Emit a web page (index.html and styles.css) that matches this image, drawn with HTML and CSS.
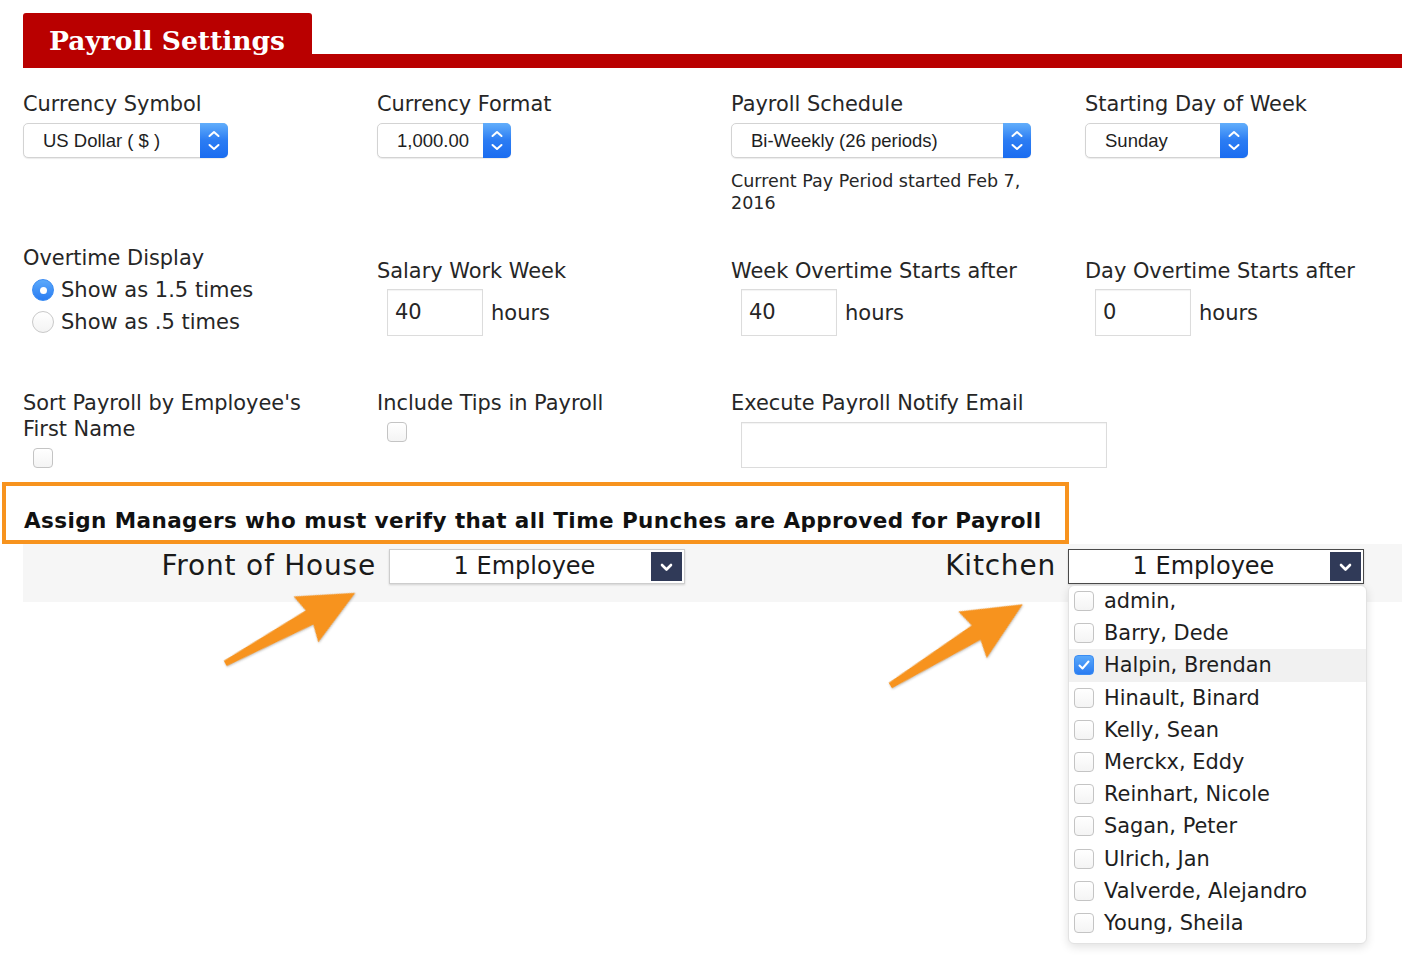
FILE: index.html
```html
<!DOCTYPE html>
<html>
<head>
<meta charset="utf-8">
<title>Payroll Settings</title>
<link rel="stylesheet" href="styles.css">
</head>
<body>
<div class="page">
  <div class="header">
    <div class="tab">Payroll Settings</div>
    <div class="bar"></div>
  </div>

  <div class="grid row1">
    <div class="cell">
      <div class="label">Currency Symbol</div>
      <div class="mselect w-sym"><span class="mtext">US Dollar ( $ )</span><span class="stepper"><svg width="28" height="35" viewBox="0 0 28 35"><path d="M9.5 13 L14 9 L18.5 13 M9.5 22 L14 26 L18.5 22" fill="none" stroke="#fff" stroke-width="2" stroke-linecap="round" stroke-linejoin="round"/></svg></span></div>
    </div>
    <div class="cell">
      <div class="label">Currency Format</div>
      <div class="mselect w-fmt"><span class="mtext">1,000.00</span><span class="stepper"><svg width="28" height="35" viewBox="0 0 28 35"><path d="M9.5 13 L14 9 L18.5 13 M9.5 22 L14 26 L18.5 22" fill="none" stroke="#fff" stroke-width="2" stroke-linecap="round" stroke-linejoin="round"/></svg></span></div>
    </div>
    <div class="cell">
      <div class="label">Payroll Schedule</div>
      <div class="mselect w-sch"><span class="mtext">Bi-Weekly (26 periods)</span><span class="stepper"><svg width="28" height="35" viewBox="0 0 28 35"><path d="M9.5 13 L14 9 L18.5 13 M9.5 22 L14 26 L18.5 22" fill="none" stroke="#fff" stroke-width="2" stroke-linecap="round" stroke-linejoin="round"/></svg></span></div>
      <div class="help">Current Pay Period started Feb 7, 2016</div>
    </div>
    <div class="cell">
      <div class="label">Starting Day of Week</div>
      <div class="mselect w-day"><span class="mtext">Sunday</span><span class="stepper"><svg width="28" height="35" viewBox="0 0 28 35"><path d="M9.5 13 L14 9 L18.5 13 M9.5 22 L14 26 L18.5 22" fill="none" stroke="#fff" stroke-width="2" stroke-linecap="round" stroke-linejoin="round"/></svg></span></div>
    </div>
  </div>

  <div class="grid row2">
    <div class="cell">
      <div class="label">Overtime Display</div>
      <div class="radios">
        <div class="radio-row"><span class="radio on"></span><span>Show as 1.5 times</span></div>
        <div class="radio-row"><span class="radio"></span><span>Show as .5 times</span></div>
      </div>
    </div>
    <div class="cell low">
      <div class="label">Salary Work Week</div>
      <div class="hours-row"><span class="tinput">40</span><span class="unit">hours</span></div>
    </div>
    <div class="cell low">
      <div class="label">Week Overtime Starts after</div>
      <div class="hours-row"><span class="tinput">40</span><span class="unit">hours</span></div>
    </div>
    <div class="cell low">
      <div class="label">Day Overtime Starts after</div>
      <div class="hours-row"><span class="tinput">0</span><span class="unit">hours</span></div>
    </div>
  </div>

  <div class="grid row3">
    <div class="cell">
      <div class="label">Sort Payroll by Employee's<br>First Name</div>
      <span class="cbox indent"></span>
    </div>
    <div class="cell">
      <div class="label">Include Tips in Payroll</div>
      <span class="cbox indent"></span>
    </div>
    <div class="cell">
      <div class="label">Execute Payroll Notify Email</div>
      <div class="email"></div>
    </div>
    <div class="cell"></div>
  </div>

  <div class="assign">Assign Managers who must verify that all Time Punches are Approved for Payroll</div>

  <div class="band">
    <div class="band-label first">Front of House</div>
    <div class="eselect"><span class="etext">1 Employee</span><span class="ebtn"><svg width="31" height="30" viewBox="0 0 31 30"><path d="M11 13 L15.5 17.5 L20 13" fill="none" stroke="#fff" stroke-width="2.6" stroke-linecap="round" stroke-linejoin="round"/></svg></span></div>
    <div class="band-label second">Kitchen</div>
    <div class="esel-wrap">
      <div class="eselect focus"><span class="etext">1 Employee</span><span class="ebtn"><svg width="31" height="30" viewBox="0 0 31 30"><path d="M11 13 L15.5 17.5 L20 13" fill="none" stroke="#fff" stroke-width="2.6" stroke-linecap="round" stroke-linejoin="round"/></svg></span></div>
      <div class="dropdown">
        <div class="item"><span class="cbox"></span>admin,</div>
        <div class="item"><span class="cbox"></span>Barry, Dede</div>
        <div class="item hl"><span class="cbox checked"><svg width="20" height="20" viewBox="0 0 20 20"><path d="M5.5 10.5 L8.5 13.5 L14.5 6.5" fill="none" stroke="#fff" stroke-width="2" stroke-linecap="round" stroke-linejoin="round"/></svg></span>Halpin, Brendan</div>
        <div class="item"><span class="cbox"></span>Hinault, Binard</div>
        <div class="item"><span class="cbox"></span>Kelly, Sean</div>
        <div class="item"><span class="cbox"></span>Merckx, Eddy</div>
        <div class="item"><span class="cbox"></span>Reinhart, Nicole</div>
        <div class="item"><span class="cbox"></span>Sagan, Peter</div>
        <div class="item"><span class="cbox"></span>Ulrich, Jan</div>
        <div class="item"><span class="cbox"></span>Valverde, Alejandro</div>
        <div class="item"><span class="cbox"></span>Young, Sheila</div>
      </div>
    </div>
  </div>

  <svg class="arrows" width="1402" height="962" viewBox="0 0 1402 962">
    <g transform="translate(225 663) rotate(-28.3)">
      <polygon class="arrow" points="0,-2.5 96,-8 92,-26 148,0 92,26 96,8 0,3.5"/>
    </g>
    <g transform="translate(890 685) rotate(-31.3) scale(1.05)">
      <polygon class="arrow" points="0,-2.5 96,-8 92,-26 148,0 92,26 96,8 0,3.5"/>
    </g>
  </svg>
</div>
</body>
</html>
```

FILE: styles.css
```css
* { box-sizing: border-box; }

body {
  margin: 0;
  background: #fff;
  color: #262626;
  font-family: "DejaVu Sans", Verdana, sans-serif;
}

.page {
  position: relative;
  width: 1402px;
  height: 962px;
  overflow: hidden;
  padding: 13px 0 0 23px;
}

/* header */
.header {
  display: flex;
  height: 55px;
}
.tab {
  width: 289px;
  background: #b90000;
  color: #fff;
  font-family: "DejaVu Serif", "Liberation Serif", serif;
  font-weight: bold;
  font-size: 26.5px;
  line-height: 55px;
  padding-left: 26px;
  border-radius: 3px 3px 0 0;
  white-space: nowrap;
}
.bar {
  flex: 1;
  align-self: flex-end;
  height: 14px;
  background: #b90000;
}

/* grid */
.grid {
  display: grid;
  grid-template-columns: 354px 354px 354px 1fr;
}
.row1 { margin-top: 23px; }
.row2 { margin-top: 31px; }
.row3 { margin-top: 52px; }

.label {
  font-size: 20.9px;
  line-height: 26px;
  white-space: nowrap;
}

/* mac selects */
.mselect {
  margin-top: 6px;
  height: 35px;
  display: flex;
  background: #fff;
  border: 1px solid #d3d3d3;
  border-radius: 5px;
  box-shadow: 0 1px 1px rgba(0,0,0,0.08);
}
.w-sym { width: 205px; }
.w-fmt { width: 134px; }
.w-sch { width: 300px; }
.w-day { width: 163px; }
.mtext {
  flex: 1;
  font-family: "Liberation Sans", Arial, sans-serif;
  font-size: 18.5px;
  line-height: 33px;
  padding-left: 19px;
  color: #1e1e1e;
  white-space: nowrap;
}
.stepper {
  width: 28px;
  margin: -1px -1px -1px 0;
  border-radius: 0 5px 5px 0;
  background: linear-gradient(#62aefb, #2b7cf3 50%, #1a6cf0);
  display: flex;
}
.help {
  margin-top: 12px;
  font-size: 17.5px;
  line-height: 22px;
  max-width: 300px;
}

/* radios */
.radios { margin-top: 3px; }
.radio-row {
  display: flex;
  align-items: center;
  height: 32px;
  font-size: 21px;
  padding-left: 9px;
}
.radio {
  width: 22px;
  height: 22px;
  border-radius: 50%;
  border: 1px solid #c9c9c9;
  background: linear-gradient(#fff, #f3f3f3);
  margin-right: 7px;
  position: relative;
}
.radio.on {
  border-color: #3a8cf3;
  background: linear-gradient(#5aa9fb, #2a7cf2);
}
.radio.on::after {
  content: "";
  position: absolute;
  width: 7px;
  height: 7px;
  border-radius: 50%;
  background: #fff;
  left: 6.5px;
  top: 6.5px;
}

/* hour inputs */
.low { padding-top: 13px; }
.hours-row {
  margin-top: 5px;
  display: flex;
  align-items: center;
}
.tinput {
  width: 96px;
  height: 47px;
  margin-left: 10px;
  border: 1px solid #dcdcdc;
  box-shadow: inset 0 1px 1px rgba(0,0,0,0.05);
  font-size: 21px;
  line-height: 45px;
  padding-left: 7px;
}
.unit {
  margin-left: 8px;
  font-size: 21px;
}

/* checkboxes */
.cbox {
  display: inline-block;
  width: 20px;
  height: 20px;
  border: 1px solid #c4c4c4;
  border-radius: 4px;
  background: linear-gradient(#fff, #f4f4f4);
  flex: none;
}
.cbox.indent {
  display: block;
  margin: 6px 0 0 10px;
}
.cbox.checked {
  border-color: #3a8cf3;
  background: linear-gradient(#5aa9fb, #2a7cf2);
}
.cbox svg { display: block; margin: -1px; }

.email {
  margin: 6px 0 0 10px;
  width: 366px;
  height: 46px;
  border: 1px solid #dcdcdc;
  box-shadow: inset 0 1px 1px rgba(0,0,0,0.05);
}

/* assign box */
.assign {
  margin: 14px 0 0 -21px;
  width: 1067px;
  height: 62px;
  border: 4px solid #f7931e;
  padding: 22px 0 0 18px;
  font-weight: bold;
  font-size: 21.5px;
  letter-spacing: 0.42px;
  line-height: 26px;
  color: #111;
  white-space: nowrap;
}

/* band */
.band {
  display: flex;
  align-items: flex-start;
  height: 58px;
  padding-top: 5px;
  background: #f6f6f6;
}
.band-label {
  text-align: right;
  font-size: 28px;
  letter-spacing: 0.8px;
  line-height: 33px;
  color: #1a1a1a;
  white-space: nowrap;
}
.band-label.first { width: 353px; margin-right: 13px; }
.band-label.second { width: 371px; margin-right: 12px; }
.esel-wrap { position: relative; }
.eselect {
  width: 296px;
  height: 35px;
  display: flex;
  background: #fff;
  border: 1px solid #cdcdcd;
  box-shadow: 0 1px 2px rgba(0,0,0,0.15);
}
.eselect.focus { border-color: #4a4a4a; }
.etext {
  flex: 1;
  text-align: center;
  font-size: 24px;
  line-height: 33px;
  padding-left: 8px;
  color: #1a1a1a;
}
.ebtn {
  width: 31px;
  margin: 2px 2px 2px 0;
  background: #303a58;
  display: flex;
}

/* dropdown */
.dropdown {
  position: absolute;
  top: 36px;
  left: 0;
  width: 299px;
  background: #fff;
  border: 1px solid #e2e2e2;
  border-radius: 6px;
  box-shadow: 0 3px 10px rgba(0,0,0,0.12);
  padding-bottom: 4px;
  z-index: 2;
}
.item {
  display: flex;
  align-items: center;
  height: 32.2px;
  padding-left: 5px;
  font-size: 20.9px;
  color: #1e1e1e;
  white-space: nowrap;
}
.item:first-child { margin-top: -1px; }
.item .cbox { margin-right: 10px; }
.item.hl { background: #f1f1f1; }

/* annotation arrows */
.arrows {
  position: absolute;
  left: 0;
  top: 0;
  pointer-events: none;
}
.arrow {
  fill: #f7931e;
  filter: drop-shadow(0 1px 1px rgba(0,0,0,0.25));
}
```
